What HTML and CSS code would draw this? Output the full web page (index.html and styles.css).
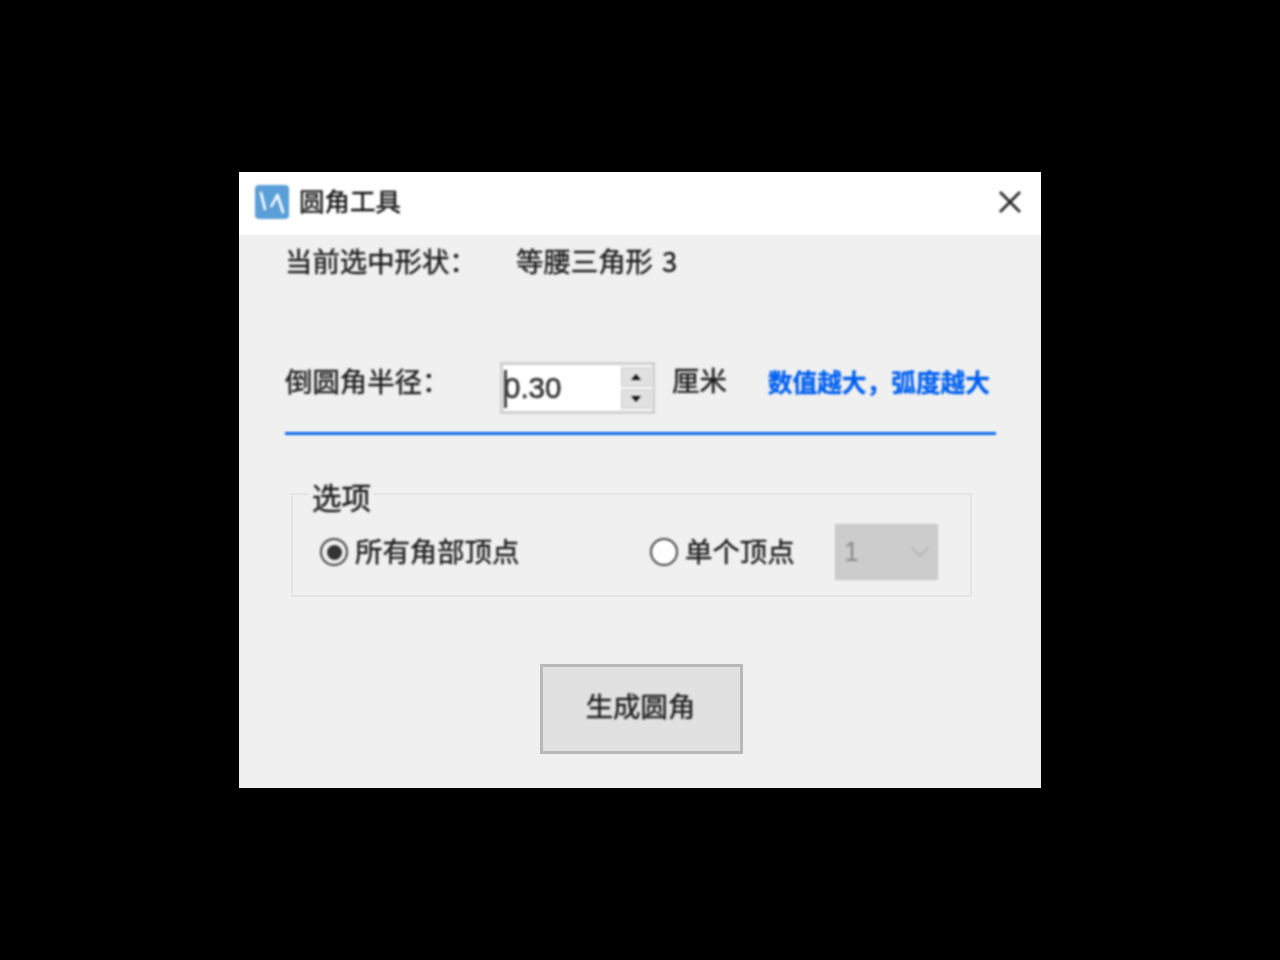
FILE: index.html
```html
<!DOCTYPE html>
<html>
<head>
    <title>圆角工具</title>
    <link rel="stylesheet" href="styles.css">
</head>
<body>
    <div class="dialog">
        <div class="title-bar">
            <div class="title-left">
                <svg class="app-icon" width="34" height="34" viewBox="0 0 34 34">
                    <rect width="34" height="34" rx="4" fill="#5b9fd8"/>
                    <path d="M6 8 L10 24 M16.5 21 L22.5 10 L28 27" fill="none" stroke="#fff" stroke-width="2.6" stroke-linecap="round" stroke-linejoin="round"/>
                </svg>
                <span class="title-text">圆角工具</span>
            </div>
            <svg class="close-icon" width="24" height="24" viewBox="0 0 24 24">
                <path d="M2 2 L22 22 M22 2 L2 22" fill="none" stroke="#222" stroke-width="2.6"/>
            </svg>
        </div>

        <div class="content">
            <div class="shape-row">
                <span class="label">当前选中形状：</span>
                <span class="text shape-name">等腰三角形</span>
                <span class="text shape-num">3</span>
            </div>

            <div class="radius-row">
                <span class="label radius-label">倒圆角半径：</span>
                <div class="spin-box">
                    <span class="caret"></span>
                    <span class="spin-value">0.30</span>
                    <div class="spin-buttons">
                        <div class="spin-btn">
                            <svg width="10" height="6" viewBox="0 0 10 6"><path d="M5 0 L10 6 L0 6 Z" fill="#111"/></svg>
                        </div>
                        <div class="spin-btn">
                            <svg width="10" height="6" viewBox="0 0 10 6"><path d="M0 0 L10 0 L5 6 Z" fill="#111"/></svg>
                        </div>
                    </div>
                </div>
                <span class="text unit">厘米</span>
                <span class="hint">数值越大，弧度越大</span>
            </div>

            <div class="divider"></div>

            <fieldset class="options">
                <legend class="text">选项</legend>
                <div class="options-row">
                    <div class="radio-item all-corners">
                        <span class="radio checked"></span>
                        <span class="text">所有角部顶点</span>
                    </div>
                    <div class="radio-item one-corner">
                        <span class="radio"></span>
                        <span class="text">单个顶点</span>
                    </div>
                    <div class="select-box">
                        <span>1</span>
                        <svg width="18" height="10" viewBox="0 0 18 10"><path d="M1 1 L9 9 L17 1" fill="none" stroke="#aeaeae" stroke-width="1.6"/></svg>
                    </div>
                </div>
            </fieldset>

            <div class="actions">
                <button type="button" class="make-btn"><span class="text btn-text">生成圆角</span></button>
            </div>
        </div>
    </div>
</body>
</html>
```

FILE: styles.css
```css
* {
    box-sizing: border-box;
}
body {
    margin: 0;
    height: 960px;
    background-color: #000;
    display: flex;
    align-items: center;
    justify-content: center;
    font-family: "Noto Sans CJK SC", "Liberation Sans", sans-serif;
    overflow: hidden;
}
.dialog {
    width: 802px;
    height: 616px;
    background-color: #f0f0f0;
}
.title-bar {
    height: 63px;
    background-color: #fff;
    display: flex;
    align-items: center;
    justify-content: space-between;
    padding: 0 19px 4px 16px;
}
.title-left {
    display: flex;
    align-items: center;
    gap: 10px;
}
.app-icon {
    filter: blur(0.8px);
}
.title-text {
    font-size: 25.5px;
    color: #111;
    margin-top: -4px;
    -webkit-text-stroke: 0.45px #111;
    filter: blur(0.8px);
}
.close-icon {
    filter: blur(0.8px);
}
.content {
    padding: 0 45px 0 46px;
}
.label,
.text {
    font-size: 27.4px;
    line-height: 36px;
    color: #1c1c1c;
    -webkit-text-stroke: 0.45px #1c1c1c;
    filter: blur(0.8px);
}
.shape-row {
    display: flex;
    padding-top: 7px;
    height: 99px;
}
.label {
    white-space: nowrap;
}
.shape-row .label {
    width: 231px;
}
.shape-num {
    margin-left: 9px;
}
.radius-row {
    display: flex;
    align-items: center;
    height: 52px;
    margin-top: 28px;
}
.radius-label {
    width: 215px;
    margin-top: -16px;
}
.spin-box {
    width: 155px;
    height: 52px;
    background-color: #fff;
    border: 3px solid #d0d0d0;
    display: flex;
    align-items: center;
    justify-content: space-between;
    position: relative;
    filter: blur(0.8px);
}
.caret {
    position: absolute;
    left: 1px;
    top: 5px;
    width: 3px;
    height: 38px;
    background-color: #444;
}
.spin-value {
    font-family: "Liberation Sans", sans-serif;
    font-size: 29.5px;
    color: #333;
    -webkit-text-stroke: 0.6px #333;
    padding-left: 1px;
}
.spin-buttons {
    width: 30px;
    height: 42px;
    display: flex;
    flex-direction: column;
    gap: 2px;
    margin-right: 1px;
}
.spin-btn {
    flex: 1;
    background-color: #e1e1e1;
    border: 1px solid #cdcdcd;
    display: flex;
    align-items: center;
    justify-content: center;
}
.unit {
    margin-left: 17px;
    margin-top: -18px;
}
.hint {
    margin-left: 41px;
    font-size: 24.7px;
    font-weight: bold;
    line-height: 36px;
    color: #0060f0;
    -webkit-text-stroke: 0.3px #0060f0;
    white-space: nowrap;
    margin-top: -14px;
    filter: blur(0.8px);
}
.divider {
    height: 3px;
    background-color: #0a6af0;
    margin-top: 18px;
    width: 711px;
    filter: blur(0.8px);
}
.options {
    margin: 41px 0 0 6px;
    padding: 0;
    width: 681px;
    height: 121px;
    border: 2px solid #e4e4e4;
    min-width: 0;
}
.options legend {
    margin-left: 16px;
    padding: 4px 3px 0;
    font-size: 29.5px;
    line-height: 32px;
}
.options-row {
    display: flex;
    align-items: center;
    height: 56px;
    margin-top: 12px;
    padding-left: 27px;
}
.radio-item {
    display: flex;
    align-items: center;
    gap: 7px;
}
.radio-item .text {
    margin-top: -5px;
}
.all-corners {
    width: 330px;
}
.one-corner {
    width: 185px;
}
.radio {
    width: 28px;
    height: 28px;
    border-radius: 50%;
    border: 2px solid #444;
    background-color: #fff;
    display: flex;
    align-items: center;
    justify-content: center;
    filter: blur(0.8px);
}
.radio.checked {
    background-color: #f0f0f0;
}
.radio.checked::after {
    content: "";
    width: 15px;
    height: 15px;
    border-radius: 50%;
    background-color: #333;
}
.select-box {
    width: 103px;
    height: 56px;
    background-color: #cccccc;
    border: 1px solid #c6c6c6;
    display: flex;
    align-items: center;
    justify-content: space-between;
    padding: 0 8px;
    font-family: "Liberation Sans", sans-serif;
    font-size: 27px;
    color: #8a8a8a;
    filter: blur(0.8px);
}
.actions {
    display: flex;
    margin-top: 67px;
    padding-left: 255px;
}
.make-btn {
    width: 203px;
    height: 90px;
    background-color: #e1e1e1;
    border: 3px solid #b8b8b8;
    font-family: inherit;
    padding: 0 2px 8px 0;
}
.btn-text {
    display: inline-block;
}
```
